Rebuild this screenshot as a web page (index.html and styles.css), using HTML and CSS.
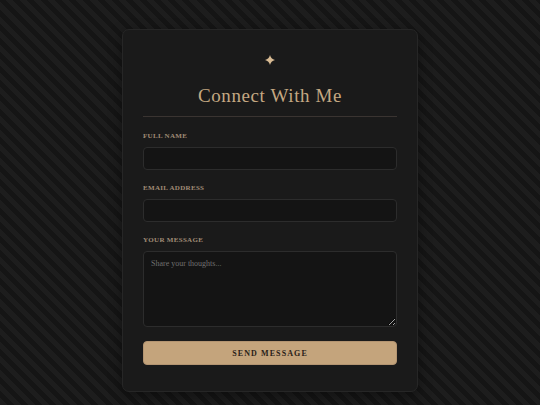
FILE: index.html
```html
<!DOCTYPE html>
<html>
<head>
<meta charset="utf-8">
<link rel="stylesheet" href="styles.css">
</head>
<body>
<div class="page">
  <form class="card">
    <div class="star">
      <svg width="10" height="10" viewBox="0 0 10 10"><path d="M5 0 Q5.9 4.1 10 5 Q5.9 5.9 5 10 Q4.1 5.9 0 5 Q4.1 4.1 5 0 Z" fill="#d8bb94"/></svg>
    </div>
    <h1 class="title">Connect With Me</h1>
    <div class="divider"></div>
    <label class="field">
      <span class="label">Full Name</span>
      <input class="input" type="text">
    </label>
    <label class="field">
      <span class="label">Email Address</span>
      <input class="input" type="text">
    </label>
    <label class="field">
      <span class="label">Your Message</span>
      <textarea class="textarea" placeholder="Share your thoughts..."></textarea>
    </label>
    <button class="button" type="button">Send Message</button>
  </form>
</div>
</body>
</html>
```

FILE: styles.css
```css
html, body {
  margin: 0;
  padding: 0;
  height: 100%;
}
body {
  background: repeating-linear-gradient(45deg, #1d1d1d 0 5px, #151515 5px 10px);
  font-family: "Liberation Serif", serif;
}
.page {
  display: flex;
  justify-content: center;
  padding-top: 29px;
}
.card {
  width: 254px;
  padding: 20px 20px 26px;
  background: #1a1a1a;
  border: 1px solid #262626;
  border-radius: 7px;
  display: flex;
  flex-direction: column;
  box-shadow: 0 4px 14px rgba(0,0,0,0.4);
}
.star {
  display: flex;
  justify-content: center;
  align-items: center;
  margin-top: 4px;
  height: 11px;
}
.title {
  margin: 20px 0 0;
  text-align: center;
  font-weight: normal;
  font-size: 19px;
  line-height: 22px;
  letter-spacing: 0.6px;
  color: #c4a882;
}
.divider {
  margin-top: 9px;
  height: 1px;
  background: #3a3431;
}
.field {
  display: flex;
  flex-direction: column;
  margin-top: 14px;
}
.field + .field {
  margin-top: 13px;
}
.label {
  font-size: 7px;
  line-height: 10px;
  letter-spacing: 0.3px;
  font-weight: bold;
  text-transform: uppercase;
  color: #a08c76;
  margin-bottom: 6px;
}
.input, .textarea {
  box-sizing: border-box;
  width: 100%;
  background: #141414;
  border: 1px solid #2c2c2c;
  border-radius: 4px;
  margin: 0;
  font-family: "Liberation Serif", serif;
  color: #ccc;
}
.input {
  height: 23px;
}
.textarea {
  height: 76px;
  padding: 7px 7px;
  font-size: 8px;
  resize: vertical;
  display: block;
}
.textarea::placeholder {
  color: #707070;
}
.button {
  margin-top: 14px;
  height: 24px;
  border: 1px solid #b39471;
  border-radius: 4px;
  background: #c4a47c;
  color: #2a2118;
  font-family: "Liberation Serif", serif;
  font-weight: bold;
  font-size: 8px;
  letter-spacing: 1.1px;
  text-transform: uppercase;
}
```
